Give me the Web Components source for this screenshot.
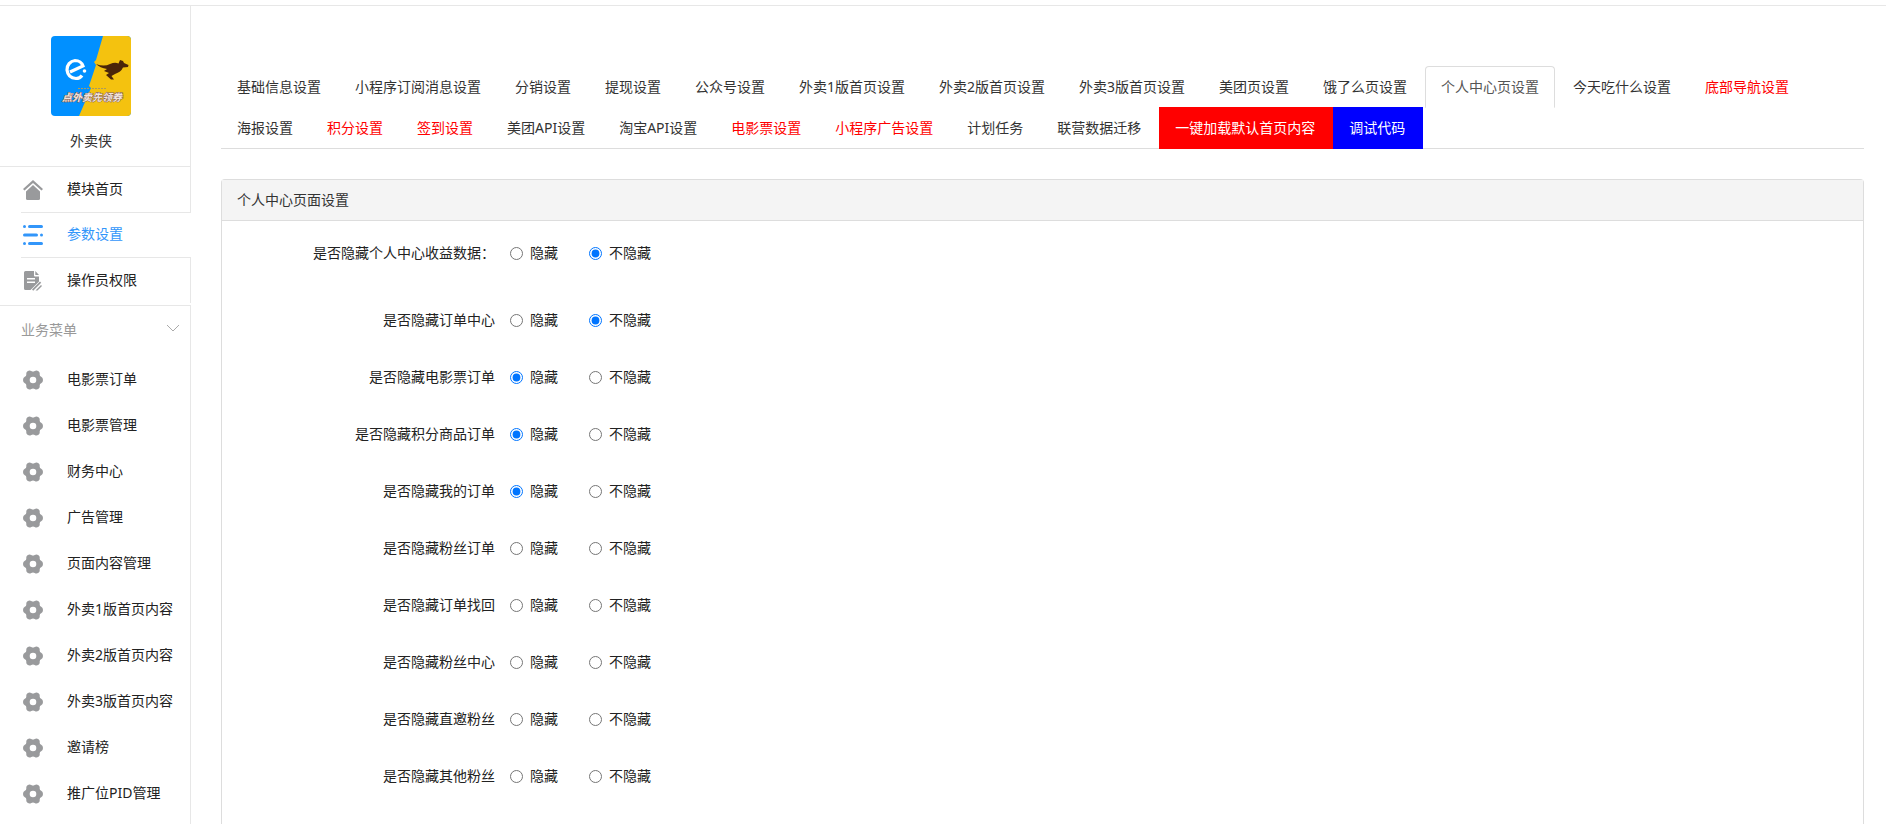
<!DOCTYPE html>
<html lang="zh-CN">
<head>
<meta charset="utf-8">
<title>外卖侠</title>
<style>
  body {
    margin: 0;
    background: #fff;
    color: #333;
    font: 14px/20px "Noto Sans", "Noto Sans CJK SC", sans-serif;
  }
</style>
</head>
<body>
<admin-app></admin-app>

<script>
const icons = {
  home: '<path d="M10 0 0 9l1.500 1.500L10 3l8.500 7.500L20 9z"/><path d="M10 5 3 11.500v7A1.500 1.500 0 0 0 4.500 20h11a1.500 1.500 0 0 0 1.500-1.500v-7z"/>',
  list: '<rect x="0" y="0" width="3" height="3" rx="1.500"/><rect x="5" y="0" width="15" height="3" rx="1.500"/><rect x="0" y="8.500" width="15" height="3" rx="1.500"/><rect x="17" y="8.500" width="3" height="3" rx="1.500"/><rect x="0" y="17" width="3" height="3" rx="1.500"/><rect x="5" y="17" width="15" height="3" rx="1.500"/>',
  doc: '<path fill-rule="evenodd" d="M2.500 0H11v4.500a1 1 0 0 0 1 1h4v5L7.500 19H2.500A1.500 1.500 0 0 1 1 17.500v-16A1.500 1.500 0 0 1 2.500 0zM4 7v1.500h8V7zm0 3.500V12h8v-1.500z"/><path d="M12.300 0 16 4h-3.700zM9 18.500l8-8 1.200 1.200-8 8zM12.500 19.500l5.500-5.500 1 1-4.500 4.500z"/>',
  gear: '<path fill-rule="evenodd" d="M4.500 1.200Q6.500-.3 8.300 1Q10 2.200 11.700 1Q13.500-.3 15.500 1.200Q17 2.300 16.700 4.500Q16.600 6.200 18.200 6.700Q20 7.500 20 10T18.200 13.300Q16.600 13.800 16.700 15.500Q17 17.700 15.500 18.800Q13.500 20.300 11.700 19Q10 17.800 8.300 19Q6.500 20.300 4.500 18.800Q3 17.700 3.300 15.500Q3.400 13.800 1.800 13.300Q0 12.500 0 10T1.800 6.700Q3.400 6.200 3.300 4.500Q3 2.300 4.500 1.200zM10 6.700a3.300 3.300 0 1 0 0 6.600 3.300 3.300 0 0 0 0-6.600z"/>'
}

class AppLogo extends HTMLElement {
  constructor() {
    super()
    this.attachShadow({ mode: 'open' })
  }

  connectedCallback() {
    this.shadowRoot.innerHTML = `
      <style>
        :host { display: block; width: 80px; height: 80px; border-radius: 4px; overflow: hidden; }
        svg { display: block; }
        text { font: italic bold 10px "Noto Sans CJK SC", sans-serif; }
      </style>
      <svg width="80" height="80" viewBox="0 0 80 80" role="img">
        <rect width="80" height="80" fill="#0190ff"/>
        <path d="M52 0 45 24l-2 2 2 3-6 18-1 3 2 2-12 28h52V0z" fill="#f4c20f"/>
        <path d="M19 36 32 30Q30 24.500 24 24.500A9 9 0 0 0 16 34Q17 42 25 42.500 29 42.500 31 39.500" fill="none" stroke="#fff" stroke-width="3.200"/>
        <circle cx="33.500" cy="35" r="1.800" fill="#fff"/>
        <path d="M45 28Q53 31 59 28Q64 26 67.500 27.500L69 24 72 25 73 27 77.500 29 77 31 72 31.500Q70 36 64 38L60.500 40 63 43.500 60 43.500 55 39 58 37 53 35 56 33Q49 32 45 28z" fill="#4b2509"/>
        <path d="M27 52.500h12M41 52.500h15" stroke="#a99b60" stroke-dasharray="2 1"/>
        <text x="11" y="65" fill="#f1e4dc" stroke="#8a6259" stroke-width="1" paint-order="stroke">点外卖先领券</text>
      </svg>
    `
  }
}

class MenuItem extends HTMLElement {
  constructor() {
    super()
    this.attachShadow({ mode: 'open' })
  }

  connectedCallback() {
    const icon = this.getAttribute('icon') ?? 'gear'

    this.shadowRoot.innerHTML = `
      <style>
        :host { display: block; color: #222; --icon-color: #999a9c; }
        :host([active]) { color: #3296fa; --icon-color: #3296fa; }
        a {
          display: flex;
          align-items: center;
          gap: 24px;
          height: var(--item-height, 46px);
          padding-left: 23px;
          color: inherit;
          text-decoration: none;
          white-space: nowrap;
        }
        span { padding-bottom: 2px; }
        svg { fill: var(--icon-color); }
      </style>
      <a href="#"><svg width="20" height="20" viewBox="0 0 20 20" aria-hidden="true">${icons[icon]}</svg><span><slot></slot></span></a>
    `
  }
}

class SideBar extends HTMLElement {
  constructor() {
    super()
    this.attachShadow({ mode: 'open' })
  }

  connectedCallback() {
    const items = [
      '电影票订单', '电影票管理', '财务中心', '广告管理', '页面内容管理',
      '外卖1版首页内容', '外卖2版首页内容', '外卖3版首页内容', '邀请榜', '推广位PID管理'
    ]

    this.shadowRoot.innerHTML = `
      <style>
        :host { display: flex; flex-direction: column; }
        .brand, .main, .group {
          box-sizing: border-box;
          border-right: 1px solid #e7e7e7;
        }
        .brand {
          display: flex;
          flex-direction: column;
          align-items: center;
          gap: 15px;
          height: 161px;
          padding: 30px 8px 0 0;
          border-bottom: 1px solid #e7e7e7;
        }
        .main { --item-height: 45px; border-right: 0; border-bottom: 1px solid #e7e7e7; padding-bottom: 2px; }
        .main menu-item { border-right: 1px solid #e7e7e7; }
        .main menu-item[active] {
          --item-height: 44px;
          border-right-color: transparent;
        }
        .line { height: 1px; margin-left: 21px; background: #e7e7e7; }
        .group { flex: 1; }
        .title {
          display: flex;
          align-items: center;
          justify-content: space-between;
          width: 100%;
          height: 51px;
          padding: 0 11px 4px 21px;
          border: 0;
          background: none;
          color: #999;
          font: inherit;
        }
      </style>
      <div class="brand"><app-logo></app-logo><span>外卖侠</span></div>
      <nav class="main">
        <menu-item icon="home">模块首页</menu-item>
        <div class="line"></div>
        <menu-item icon="list" active>参数设置</menu-item>
        <div class="line"></div>
        <menu-item icon="doc">操作员权限</menu-item>
      </nav>
      <nav class="group">
        <button class="title" type="button">业务菜单
          <svg width="12" height="12" viewBox="0 0 12 12" fill="none" stroke="#aaa" aria-hidden="true"><path d="M0 1l6 6 6-6"/></svg>
        </button>
        ${items.map((item) => `<menu-item>${item}</menu-item>`).join('')}
      </nav>
    `
  }
}

class TabLink extends HTMLElement {
  constructor() {
    super()
    this.attachShadow({ mode: 'open' })
  }

  connectedCallback() {
    this.shadowRoot.innerHTML = `
      <style>
        :host { display: block; margin-bottom: -1px; color: #333; }
        :host([kind="red"]) { color: #f00; }
        :host([kind="load"]) { background: #f00; color: #fff; }
        :host([kind="debug"]) { background: #00f; color: #fff; }
        :host([kind="active"]) { color: #555; }
        a {
          display: block;
          margin-right: 2px;
          padding: 10px 15px;
          border: 1px solid transparent;
          border-radius: 4px 4px 0 0;
          color: inherit;
          text-decoration: none;
          white-space: nowrap;
        }
        :host([kind="active"]) a { border-color: #ddd #ddd transparent; }
      </style>
      <a href="#"><slot></slot></a>
    `
  }
}

class TabBar extends HTMLElement {
  constructor() {
    super()
    this.attachShadow({ mode: 'open' })
  }

  connectedCallback() {
    this.shadowRoot.innerHTML = `
      <style>
        :host { display: flex; flex-wrap: wrap; border-bottom: 1px solid #ddd; }
      </style>
      <slot></slot>
    `
  }
}

class SettingsPanel extends HTMLElement {
  constructor() {
    super()
    this.attachShadow({ mode: 'open' })
  }

  connectedCallback() {
    this.shadowRoot.innerHTML = `
      <style>
        :host { display: block; border: 1px solid #ddd; border-bottom: 0; border-radius: 4px 4px 0 0; }
        header { padding: 10px 15px; border-bottom: 1px solid #ddd; background: #f4f4f4; }
        form { padding: 22px 0 0; }
      </style>
      <header><slot name="title"></slot></header>
      <form><slot></slot></form>
    `
  }
}

class RadioRow extends HTMLElement {
  constructor() {
    super()
    this.attachShadow({ mode: 'open' })
  }

  connectedCallback() {
    const value = this.getAttribute('value')

    this.shadowRoot.innerHTML = `
      <style>
        :host { display: block; margin-bottom: 37px; color: #222; }
        :host([spaced]) { margin-bottom: 47px; }
        fieldset { display: flex; margin: 0; padding: 0; border: 0; }
        .name { width: 273px; margin-right: 15px; text-align: right; }
        label { display: flex; align-items: center; gap: 7px; margin-right: 31px; }
        input { width: 13px; height: 13px; margin: 0; }
      </style>
      <fieldset aria-labelledby="name">
        <span class="name" id="name"><slot></slot></span>
        <label><input type="radio" name="hide" value="1" ${value === '1' ? 'checked' : ''}>隐藏</label>
        <label><input type="radio" name="hide" value="0" ${value === '0' ? 'checked' : ''}>不隐藏</label>
      </fieldset>
    `
  }
}

class AdminApp extends HTMLElement {
  constructor() {
    super()
    this.attachShadow({ mode: 'open' })

    this.tabs = [
      ['基础信息设置'], ['小程序订阅消息设置'], ['分销设置'], ['提现设置'], ['公众号设置'],
      ['外卖1版首页设置'], ['外卖2版首页设置'], ['外卖3版首页设置'], ['美团页设置'],
      ['饿了么页设置'], ['个人中心页设置', 'active'], ['今天吃什么设置'], ['底部导航设置', 'red'],
      ['海报设置'], ['积分设置', 'red'], ['签到设置', 'red'], ['美团API设置'], ['淘宝API设置'],
      ['电影票设置', 'red'], ['小程序广告设置', 'red'], ['计划任务'], ['联营数据迁移'],
      ['一键加载默认首页内容', 'load'], ['调试代码', 'debug']
    ]
    this.rows = [
      ['是否隐藏个人中心收益数据：', '0'],
      ['是否隐藏订单中心', '0'],
      ['是否隐藏电影票订单', '1'],
      ['是否隐藏积分商品订单', '1'],
      ['是否隐藏我的订单', '1'],
      ['是否隐藏粉丝订单', ''],
      ['是否隐藏订单找回', ''],
      ['是否隐藏粉丝中心', ''],
      ['是否隐藏直邀粉丝', ''],
      ['是否隐藏其他粉丝', '']
    ]
  }

  connectedCallback() {
    this.shadowRoot.innerHTML = `
      <style>
        :host {
          display: flex;
          box-sizing: border-box;
          min-height: 100vh;
          padding-top: 5px;
        }
        .page { display: flex; flex: 1; min-width: 0; border-top: 1px solid #e7e7e7; }
        side-bar { flex: 0 0 191px; }
        main {
          display: flex;
          flex: 1;
          flex-direction: column;
          gap: 30px;
          min-width: 0;
          padding: 60px 22px 0 30px;
        }
        settings-panel { flex: 1; }
      </style>
      <div class="page">
        <side-bar></side-bar>
        <main>
          <tab-bar>${this.tabs.map(([text, kind]) => `<tab-link kind="${kind ?? ''}">${text}</tab-link>`).join('')}</tab-bar>
          <settings-panel>
            <span slot="title">个人中心页面设置</span>
            ${this.rows.map(([text, value], i) => `<radio-row value="${value}" ${i === 0 ? 'spaced' : ''}>${text}</radio-row>`).join('')}
          </settings-panel>
        </main>
      </div>
    `
  }
}

customElements.define('app-logo', AppLogo)
customElements.define('menu-item', MenuItem)
customElements.define('side-bar', SideBar)
customElements.define('tab-link', TabLink)
customElements.define('tab-bar', TabBar)
customElements.define('settings-panel', SettingsPanel)
customElements.define('radio-row', RadioRow)
customElements.define('admin-app', AdminApp)
</script>
</body>
</html>
